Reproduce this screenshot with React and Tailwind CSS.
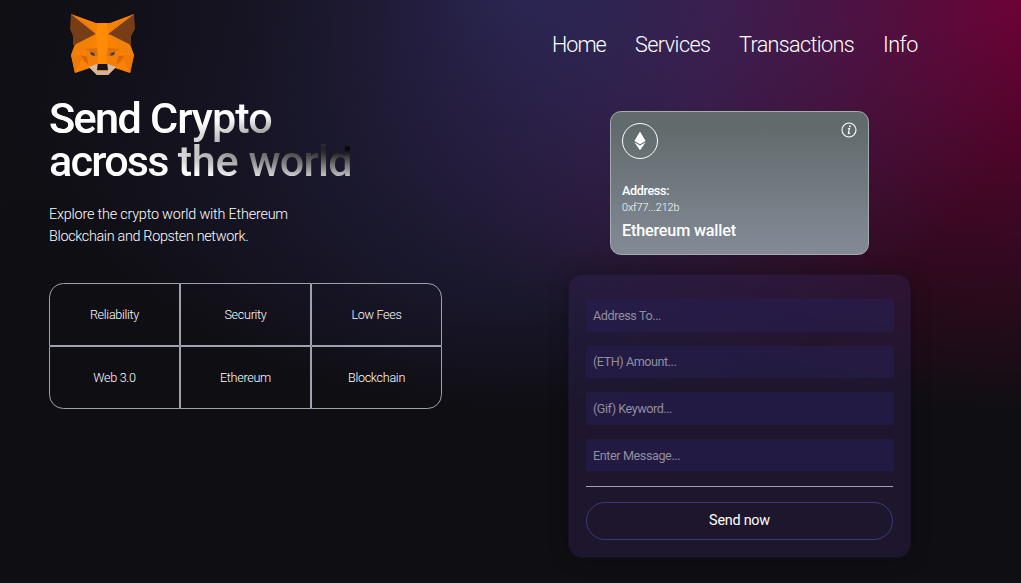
function Fox() {
  return (
    <svg width="65" height="62" viewBox="0 0 65 62" aria-label="Fox logo">
      <polygon points="1,0 26,9 40,9 64,0 60,30 64,41 60,59 45,54 38,61 27,61 20,54 5,59 1,41 5,30" fill="#f98203" />
      <polygon points="1,0 26,20 6,31 3,31 3,22 0,15" fill="#763d16" />
      <polygon points="64,0 38,20 58,31 61,31 61,22 65,15" fill="#763d16" />
      <polygon points="1,0 17,9 26,20" fill="#e57d14" />
      <polygon points="64,0 48,9 38,20" fill="#e57d14" />
      <polygon points="17,9 28,9 26,20" fill="#f48208" />
      <polygon points="48,9 37,9 38,20" fill="#f48208" />
      <polygon points="28,9 37,9 38,20 36,50 28,50 26,20" fill="#ff8c06" />
      <polygon points="6,30 26,20 16,37 1,41" fill="#f38107" />
      <polygon points="59,30 39,20 49,37 64,41" fill="#f38107" />
      <polygon points="15,35 27,34 28,43" fill="#dd700a" />
      <polygon points="50,35 38,34 37,43" fill="#dd700a" />
      <polygon points="1,41 14,41 5,59" fill="#ee7b08" />
      <polygon points="64,41 51,41 60,59" fill="#ee7b08" />
      <polygon points="11,42 18,42 19,51 14,47" fill="#da650d" />
      <polygon points="54,42 47,42 46,51 51,47" fill="#da650d" />
      <polygon points="15,37 28,43 26,52 19,54 17,43" fill="#f57e08" />
      <polygon points="50,37 37,43 39,52 46,54 48,43" fill="#f57e08" />
      <polygon points="20,38 24,39 25,42 21,41" fill="#324054" />
      <polygon points="45,38 41,39 40,42 44,41" fill="#324054" />
      <polygon points="18,52 27,57 38,57 47,52 38,61 27,61" fill="#cfb5a0" />
      <polygon points="19,53 27,50 27,60" fill="#d5bba6" />
      <polygon points="46,53 38,50 38,60" fill="#d5bba6" />
      <polygon points="28,50 37,50 38,56 27,56" fill="#151515" />
    </svg>
  );
}

function Cell({ className = '', children }) {
  return (
    <div className={`flex items-center justify-center border border-[#9ca3af] pt-[2px] text-[12.6px] font-light tracking-[-0.3px] text-white ${className}`}>
      {children}
    </div>
  );
}

function Field({ label, className }) {
  return (
    <input
      placeholder={label}
      className={`block h-[32.6px] w-[308px] rounded-[2px] bg-[#271e50]/60 px-[7px] text-[12.6px] text-white outline-none placeholder:text-[#918e9f] ${className}`}
    />
  );
}

export default function App() {
  return (
    <div className="h-[583px] w-[1021px] overflow-hidden bg-[#0f0e13] bg-[radial-gradient(at_0%_0%,hsla(253,16%,7%,1)_0,transparent_50%),radial-gradient(530px_412px_at_50%_0%,hsla(245,39%,30%,1)_0,transparent_100%),radial-gradient(at_100%_0%,hsla(332,100%,22%,1)_0,transparent_50%)] font-['Roboto',sans-serif] text-white">
      <header className="flex h-[97px] justify-between pt-[14px] pl-[70px]">
        <Fox />
        <nav className="flex h-[62px] w-[469px] items-center text-[21.6px] font-light">
          <a className="w-[83px] tracking-[-1px]">Home</a>
          <a className="w-[104px] tracking-[-0.55px]">Services</a>
          <a className="w-[144px] tracking-[-0.65px]">Transactions</a>
          <a className="tracking-[-0.55px]">Info</a>
        </nav>
      </header>
      <main className="flex">
        <section className="w-[568px] pl-[49px]">
          <h1 className="w-[304px] bg-white bg-[radial-gradient(at_4%_36%,#fff_0,transparent_53%),radial-gradient(at_100%_60%,#000_0,transparent_50%)] bg-clip-text text-[43.2px] leading-[43.2px] font-medium whitespace-nowrap text-transparent">
            <span className="block tracking-[-1px]"><span className="tracking-[-1.6px]">Send</span> Crypto</span>
            <span className="block tracking-[-0.8px]"><span className="tracking-[-1.8px]">across</span> <span className="tracking-[-0.2px]">the</span> world</span>
          </h1>
          <p className="mt-[21px] text-[14.4px] leading-[22px] font-light whitespace-nowrap">
            <span className="block tracking-[-0.2px]">Explore the crypto world with Ethereum</span>
            <span className="block tracking-[-0.33px]">Blockchain and Ropsten network.</span>
          </p>
          <div className="mt-[35px] grid w-[393px] grid-cols-3 grid-rows-[63px_63px]">
            <Cell className="rounded-tl-[14.4px]">Reliability</Cell>
            <Cell>Security</Cell>
            <Cell className="rounded-tr-[14.4px]">Low Fees</Cell>
            <Cell className="rounded-bl-[14.4px]">Web 3.0</Cell>
            <Cell>Ethereum</Cell>
            <Cell className="rounded-br-[14.4px]">Blockchain</Cell>
          </div>
        </section>
        <section className="flex w-[343px] flex-col items-center pt-[14px]">
          <div className="flex h-[144px] w-[259px] flex-col justify-between rounded-[10.8px] border border-[#a3adad] bg-linear-to-b from-[#616b6c] from-10% to-[#838a96] p-[11px]">
            <div className="flex items-start justify-between">
              <div className="flex size-[36px] items-center justify-center rounded-full border border-white">
                <svg width="12" height="20" viewBox="0 0 12 20" fill="#fff">
                  <path d="M6 .5 11.6 10 6 13.3.4 10Z" />
                  <path d="M.4 11.2 6 14.5l5.6-3.3L6 19.3Z" />
                </svg>
              </div>
              <svg className="-mt-[1px]" width="16" height="16" viewBox="0 0 16 16" fill="none" stroke="#fff" strokeWidth="1.1">
                <circle cx="8" cy="8" r="7" />
                <path d="M7 6.8 8.5 6.4 7.3 11.3Q7.3 12 9 11" />
                <circle cx="8.9" cy="4.3" r=".4" fill="#fff" />
              </svg>
            </div>
            <div>
              <p className="text-[12.6px] leading-[18px] font-medium tracking-[-0.35px]">Address:</p>
              <p className="text-[10.8px] leading-[16px] font-light tracking-[-0.1px]">0xf77...212b</p>
              <p className="mt-[2px] text-[16.2px] leading-[25px] font-medium tracking-[-0.18px]">Ethereum wallet</p>
            </div>
          </div>
          <form className="mt-[19px] h-[284px] w-[343px] rounded-[14.4px] border border-black/20 bg-[#322454]/40 px-[17px] pt-[24px] shadow-[0_0_20px_rgba(0,0,0,0.25)]">
            <div className="flex flex-col gap-[14px]">
              <Field label="Address To..." className="tracking-[-0.4px]" />
              <Field label="(ETH) Amount..." className="tracking-[-0.45px]" />
              <Field label="(Gif) Keyword..." className="tracking-[-0.45px]" />
              <Field label="Enter Message..." className="tracking-[-0.4px]" />
            </div>
            <div className="mt-[14.6px] h-px w-[307px] bg-[#9ca3af]" />
            <button type="button" className="mt-[15px] block h-[38px] w-[307px] rounded-full border border-[#3d3979] text-[14.4px] tracking-[-0.25px]">
              Send now
            </button>
          </form>
        </section>
      </main>
    </div>
  );
}
